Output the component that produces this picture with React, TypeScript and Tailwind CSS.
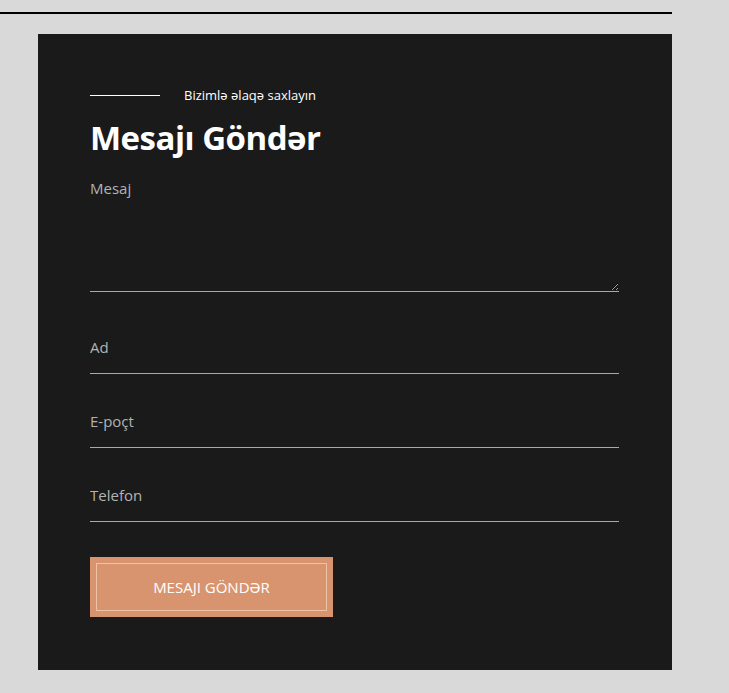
import React from "react";

export default function App() {
  const font = { fontFamily: '"Open Sans", "Noto Sans", sans-serif' };
  return (
    <div className="min-h-[693px] w-full bg-[#d9d9d9]" style={font}>
      <div className="h-[12px]" />
      <div className="h-[2px] w-[672px] bg-black" />
      <div className="ml-[38px] mt-[20px] h-[636px] w-[634px] bg-[#1a1a1a] pl-[52px] pr-[53px] pt-[53px]">
        <div className="flex h-[16px] items-center">
          <div className="h-px w-[70px] bg-white" />
          <span className="ml-[24px] text-[13px] leading-[16px] text-white">Bizimlə əlaqə saxlayın</span>
        </div>
        <h1 className="mt-[15px] text-[33px] font-bold leading-[40px] tracking-[-0.5px] text-white">Mesajı Göndər</h1>
        <form className="mt-[20px] flex flex-col" onSubmit={(e) => e.preventDefault()}>
          <textarea
            placeholder="Mesaj"
            className="box-border h-[114px] w-full resize-y border-0 border-b border-solid border-[#a9a9a9] bg-transparent p-0 text-[15px] leading-[20px] text-white outline-none placeholder:text-[#b3b3b3]"
          />
          <input
            placeholder="Ad"
            className="mt-[40px] box-border h-[42px] w-full border-0 border-b border-solid border-[#a9a9a9] bg-transparent p-0 pb-[11px] text-[15px] text-white outline-none placeholder:text-[#b3b3b3]"
          />
          <input
            placeholder="E-poçt"
            className="mt-[32px] box-border h-[42px] w-full border-0 border-b border-solid border-[#a9a9a9] bg-transparent p-0 pb-[11px] text-[15px] text-white outline-none placeholder:text-[#b3b3b3]"
          />
          <input
            placeholder="Telefon"
            className="mt-[32px] box-border h-[42px] w-full border-0 border-b border-solid border-[#a9a9a9] bg-transparent p-0 pb-[11px] text-[15px] text-white outline-none placeholder:text-[#b3b3b3]"
          />
          <button
            type="submit"
            className="mt-[35px] h-[60px] w-[243px] bg-[#d8946e] p-[6px]"
          >
            <span className="flex h-full w-full items-center justify-center border border-[#efc3a6] text-[15px] text-white">
              MESAJI GÖNDƏR
            </span>
          </button>
        </form>
      </div>
    </div>
  );
}
